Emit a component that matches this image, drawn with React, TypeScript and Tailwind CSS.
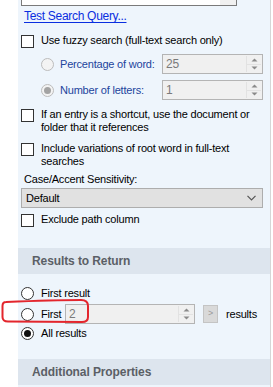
import { ReactNode } from "react";

/* ================= SMALL CONTROLS ================= */

function CheckBox() {
  return <div className="w-[13px] h-[13px] shrink-0 border border-[#333333] bg-white" />;
}

function Radio({ checked, disabled }: { checked?: boolean; disabled?: boolean }) {
  return (
    <div
      className={`w-[13px] h-[13px] shrink-0 rounded-full border flex items-center justify-center ${
        disabled ? "border-[#bcbcbc] bg-[#f3f3f3]" : "border-[#333333] bg-white"
      }`}
    >
      {checked && (
        <div className={`w-[7px] h-[7px] rounded-full ${disabled ? "bg-[#a3a3a3]" : "bg-[#111111]"}`} />
      )}
    </div>
  );
}

function SpinBox({ value, width }: { value: string; width: string }) {
  return (
    <div className={`${width} h-[20px] shrink-0 flex border border-[#b4b4b4] bg-[#f0f0f0]`}>
      <div className="flex-1 pl-[3px] text-[12px] text-[#7a7a7a] leading-[18px]">{value}</div>
      <div className="w-[15px] my-[1px] mr-[1px] flex flex-col border-l border-[#e2e2e2]">
        <div className="flex-1 flex items-center justify-center border-b border-[#e2e2e2]">
          <svg width="7" height="4" viewBox="0 0 7 4">
            <path d="M0.5 3.5 L3.5 0.5 L6.5 3.5 Z" fill="#8a8a8a" />
          </svg>
        </div>
        <div className="flex-1 flex items-center justify-center">
          <svg width="7" height="4" viewBox="0 0 7 4">
            <path d="M0.5 0.5 L3.5 3.5 L6.5 0.5 Z" fill="#8a8a8a" />
          </svg>
        </div>
      </div>
    </div>
  );
}

function CheckRow({ children, className = "" }: { children: ReactNode; className?: string }) {
  return (
    <div className={`flex items-start gap-[7px] pl-[3px] ${className}`}>
      <div className="pt-[1px]">
        <CheckBox />
      </div>
      <div className="leading-[13px] whitespace-nowrap">{children}</div>
    </div>
  );
}

function SectionHeader({ title, className = "" }: { title: string; className?: string }) {
  return (
    <div
      className={`h-[26px] bg-[#dde5ee] pl-[14px] flex items-center text-[12px] font-bold tracking-[-0.1px] text-[#5b5f66] ${className}`}
    >
      {title}
    </div>
  );
}

/* ================= PAGE ================= */

export default function App() {
  return (
    <div
      className="w-[273px] h-[387px] relative overflow-hidden bg-white flex text-[11px] tracking-[-0.2px] text-black"
      style={{ fontFamily: '"Liberation Sans", Arial, sans-serif' }}
    >
      <div className="w-[18px] shrink-0" />

      <div className="w-[253px] shrink-0 bg-[#eef5fc] border-r border-[#d6d6d6]">
        {/* query box (cut off at top) */}
        <div className="ml-[3px] w-[216px] h-[6px] flex border-x border-b border-[#7a7a7a] bg-white">
          <div className="flex-1" />
          <div className="w-[16px] bg-[#f0f0f0]" />
        </div>

        <div className="mt-[4px] ml-[6px] h-[13px] leading-[13px] text-[12px] tracking-[-0.3px]">
          <span className="text-[#0a2ee0] underline underline-offset-2">Test Search Query...</span>
        </div>

        <CheckRow className="mt-[11px]">Use fuzzy search (full-text search only)</CheckRow>

        <div className="mt-[6px] ml-[23px] flex items-center h-[20px]">
          <Radio disabled />
          <span className="ml-[6px] w-[102px] whitespace-nowrap text-[#22449c]">Percentage of word:</span>
          <SpinBox value="25" width="w-[101px]" />
        </div>

        <div className="mt-[6px] ml-[23px] flex items-center h-[20px]">
          <Radio disabled checked />
          <span className="ml-[6px] w-[102px] whitespace-nowrap text-[#22449c]">Number of letters:</span>
          <SpinBox value="1" width="w-[101px]" />
        </div>

        <CheckRow className="mt-[8px]">
          If an entry is a shortcut, use the document or
          <br />
          folder that it references
        </CheckRow>

        <CheckRow className="mt-[8px]">
          Include variations of root word in full-text
          <br />
          searches
        </CheckRow>

        <div className="mt-[5px] ml-[6px] leading-[13px]">Case/Accent Sensitivity:</div>

        <div className="mt-[2px] ml-[3px] w-[242px] h-[20px] border border-[#adadad] bg-[#e1e1e1] flex items-center justify-between pl-[4px] pr-[6px]">
          <span>Default</span>
          <svg width="9" height="6" viewBox="0 0 9 6">
            <path d="M0.5 0.8 L4.5 4.8 L8.5 0.8" fill="none" stroke="#555555" strokeWidth="1.2" />
          </svg>
        </div>

        <CheckRow className="mt-[5px]">Exclude path column</CheckRow>

        <SectionHeader title="Results to Return" className="mt-[21px]" />

        <div className="mt-[13px] ml-[3px] flex items-start gap-[7px] h-[13px] leading-[13px]">
          <Radio />
          <span>First result</span>
        </div>

        <div className="mt-[4px] ml-[3px] flex items-center h-[20px]">
          <Radio />
          <span className="ml-[7px] w-[24px]">First</span>
          <SpinBox value="2" width="w-[130px]" />
          <div className="ml-[8px] w-[15px] h-[18px] bg-[#d9d9d9] border border-[#c4c4c4] flex items-center justify-center text-[9px] text-[#9a9a9a]">
            &gt;
          </div>
          <span className="ml-[8px]">results</span>
        </div>

        <div className="mt-[3px] ml-[3px] flex items-start gap-[7px] h-[13px] leading-[13px]">
          <Radio checked />
          <span>All results</span>
        </div>

        <SectionHeader title="Additional Properties" className="mt-[19px]" />
      </div>

      {/* red hand-drawn annotation */}
      <svg className="absolute left-0 top-[296px]" width="92" height="30" viewBox="0 0 92 30">
        <path
          d="M6 6 C 30 5, 60 4, 81 4 C 86 4, 88 6, 88 10 L 88 21 C 88 24, 86 26, 82 26 L 8 25.5 C 4 25.5, 2.5 24, 2.5 21 L 2.5 10 C 2.5 7, 3.5 6, 6 6 Z"
          fill="none"
          stroke="#e3262d"
          strokeWidth="2"
        />
      </svg>
    </div>
  );
}
